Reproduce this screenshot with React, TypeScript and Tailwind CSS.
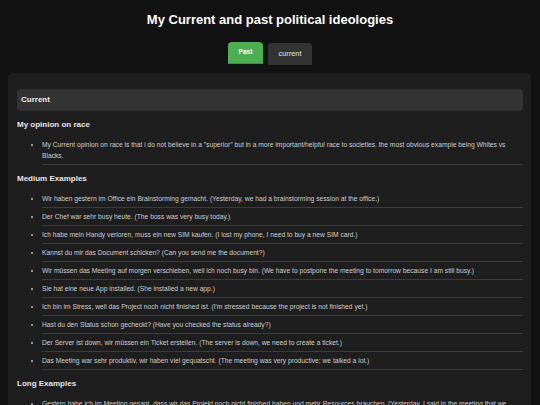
import { useState } from 'react'

const opinion = [
  'My Current opinion on race is that i do not believe in a "superior" but in a more important/helpful race to societies. the most obvious example being Whites vs Blacks.',
]

const medium = [
  'Wir haben gestern im Office ein Brainstorming gemacht. (Yesterday, we had a brainstorming session at the office.)',
  'Der Chef war sehr busy heute. (The boss was very busy today.)',
  'Ich habe mein Handy verloren, muss ein new SIM kaufen. (I lost my phone, I need to buy a new SIM card.)',
  'Kannst du mir das Document schicken? (Can you send me the document?)',
  'Wir müssen das Meeting auf morgen verschieben, weil ich noch busy bin. (We have to postpone the meeting to tomorrow because I am still busy.)',
  'Sie hat eine neue App installed. (She installed a new app.)',
  "Ich bin im Stress, weil das Project noch nicht finished ist. (I'm stressed because the project is not finished yet.)",
  'Hast du den Status schon gecheckt? (Have you checked the status already?)',
  'Der Server ist down, wir müssen ein Ticket erstellen. (The server is down, we need to create a ticket.)',
  'Das Meeting war sehr produktiv, wir haben viel gequatscht. (The meeting was very productive; we talked a lot.)',
]

const long = [
  "Gestern habe ich im Meeting gesagt, dass wir das Projekt noch nicht finished haben und mehr Resources brauchen. (Yesterday, I said in the meeting that we haven't finished the project yet and need more resources.)",
  'Kannst du bitte das Update checken, bevor wir es deployen, weil der Kunde morgen eine Demo sehen will? (Can you please check the update before we deploy it, because the client wants to see a demo tomorrow?)',
]

function Section({ title, items }: { title: string; items: string[] }) {
  return (
    <div>
      <h3 className="mt-[9px] text-[8px] font-bold leading-[10px] text-[#e6e6e6]">{title}</h3>
      <ul className="mt-[6px] list-disc pl-[25px] text-[6.7px] leading-[11px] text-[#cfcfcf] marker:text-[#bbb]">
        {items.map((item) => (
          <li key={item} className="border-b border-[#3c3c3c] py-[3px]">
            {item}
          </li>
        ))}
      </ul>
    </div>
  )
}

export default function App() {
  const [tab, setTab] = useState<'past' | 'current'>('current')

  return (
    <div className="min-h-screen bg-[#121212] pb-6 font-['Liberation_Sans',Arial,sans-serif] text-white">
      <h1 className="pt-[12px] text-center text-[13px] font-bold leading-[15px] text-white">
        My Current and past political ideologies
      </h1>

      <div className="mt-[15px] flex justify-center gap-[5px]">
        <button
          onClick={() => setTab('past')}
          className="h-[22px] w-[35px] rounded-t-[4px] rounded-b-[1px] border-b border-[#3e8e41] bg-[#4caf50] text-[6.7px] font-bold text-white"
        >
          Past
        </button>
        <button
          onClick={() => setTab('current')}
          className="mt-[1px] h-[22px] w-[44px] rounded-t-[4px] bg-[#333333] text-[7.4px] text-[#e6e6e6]"
        >
          current
        </button>
      </div>

      <div className="mt-[8px] ml-[8px] w-[523px] rounded-[5px] bg-[#1e1e1e] pt-[16px] pr-[8px] pb-4 pl-[9px]">
        <div className="flex h-[22px] items-center rounded-[3px] bg-[#333333] px-[4px] text-[8px] font-bold text-[#ececec]">
          {tab === 'current' ? 'Current' : 'Current'}
        </div>
        <Section title="My opinion on race" items={opinion} />
        <Section title="Medium Examples" items={medium} />
        <Section title="Long Examples" items={long} />
      </div>
    </div>
  )
}
